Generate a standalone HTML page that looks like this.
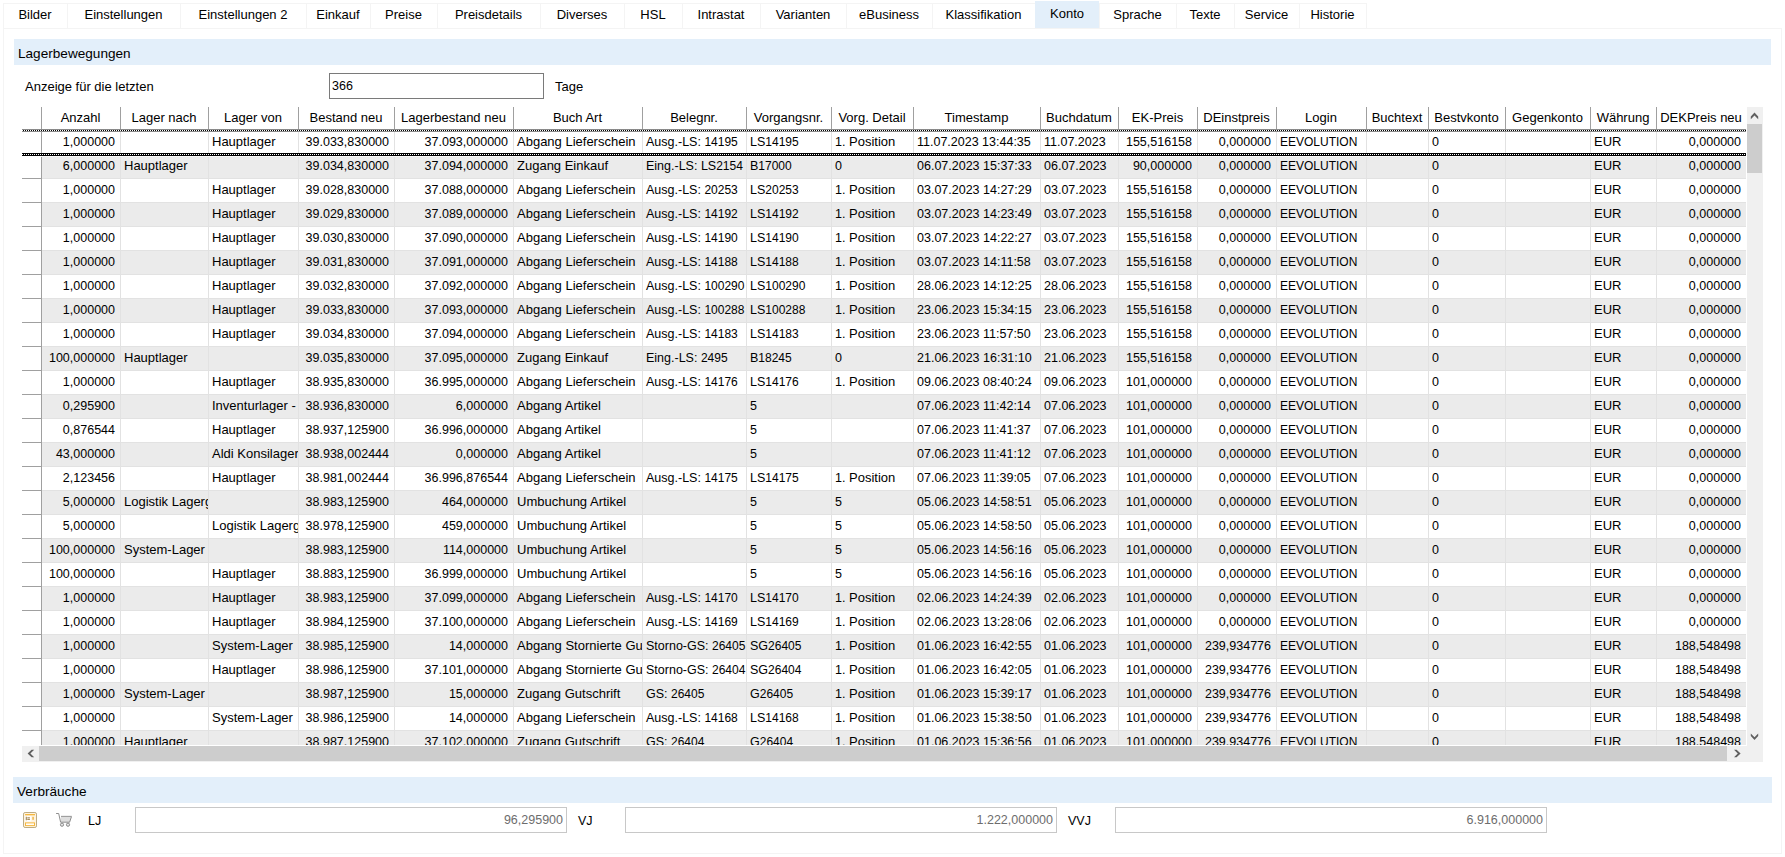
<!DOCTYPE html>
<html><head><meta charset="utf-8"><title>Konto</title>
<style>
*{box-sizing:border-box;margin:0;padding:0}
html,body{width:1785px;height:857px;overflow:hidden;background:#fff}
body{position:relative;font-family:"Liberation Sans",sans-serif;font-size:12px;color:#000}
.a{position:absolute}
.ln{position:absolute;background:#f4f4f4}
.tab{position:absolute;top:3px;height:25px;text-align:center;line-height:23px;white-space:nowrap;font-size:13px;letter-spacing:0px}
.sep{position:absolute;top:3px;width:1px;height:25px;background:#f4f4f4}
.sh{position:absolute;background:#e3effa;height:26px;font-size:13.6px;line-height:26px;padding-left:4px;padding-top:2px}
.grid{position:absolute;left:22px;top:107px;width:1724px;height:638px;overflow:hidden;background:#fff}
.hd{position:absolute;top:0;height:23px;line-height:22px;text-align:center;white-space:nowrap;overflow:hidden;font-size:13px}
.hs{position:absolute;top:0;width:1px;height:23px;background:#a0a0a0}
.r{position:absolute;left:0;width:1724px;height:24px;border-bottom:1px solid #e2e2e2}
.g{background:#ebebeb}
.c{position:absolute;top:0;height:24px;line-height:24px;white-space:nowrap;overflow:hidden;padding:0 5px 0 3px;font-size:12.5px}
.n{font-size:12.5px}
.c.R{text-align:right}
.t{font-size:13px}
.t.u{font-size:12px}
.t.m{font-size:12.5px}
.t.m .n{font-size:12px}
.vs{position:absolute;top:23px;width:1px;height:615px;background:#e2e2e2}
.rh{position:absolute;left:0;width:19px;height:1px;background:#a0a0a0}
.inp{position:absolute;border:1px solid #7a7a7a;background:#fff}
.inp2{position:absolute;border:1px solid #c8c8c8;background:#fff;text-align:right;color:#6d6d6d;padding-right:3px;line-height:25px;font-size:12.5px}
</style></head><body>

<div class="ln" style="left:3px;top:3px;width:1364px;height:1px"></div>
<div class="ln" style="left:3px;top:28px;width:1779px;height:1px"></div>
<div class="ln" style="left:3px;top:3px;width:1px;height:851px"></div>
<div class="ln" style="left:1781px;top:28px;width:1px;height:826px"></div>
<div class="ln" style="left:3px;top:853px;width:1779px;height:1px"></div>
<div class="tab" style="left:3px;width:64px">Bilder</div>
<div class="tab" style="left:67px;width:113px">Einstellungen</div>
<div class="tab" style="left:180px;width:126px">Einstellungen 2</div>
<div class="tab" style="left:306px;width:64px">Einkauf</div>
<div class="tab" style="left:370px;width:67px">Preise</div>
<div class="tab" style="left:437px;width:103px">Preisdetails</div>
<div class="tab" style="left:540px;width:84px">Diverses</div>
<div class="tab" style="left:624px;width:58px">HSL</div>
<div class="tab" style="left:682px;width:78px">Intrastat</div>
<div class="tab" style="left:760px;width:86px">Varianten</div>
<div class="tab" style="left:846px;width:86px">eBusiness</div>
<div class="tab" style="left:932px;width:103px">Klassifikation</div>
<div class="a" style="left:1035px;top:1px;width:64px;height:27px;background:#e3effa"></div>
<div class="tab" style="left:1035px;width:64px;top:2px">Konto</div>
<div class="tab" style="left:1099px;width:77px">Sprache</div>
<div class="tab" style="left:1176px;width:58px">Texte</div>
<div class="tab" style="left:1234px;width:65px">Service</div>
<div class="tab" style="left:1299px;width:67px">Historie</div>
<div class="sep" style="left:67px"></div>
<div class="sep" style="left:180px"></div>
<div class="sep" style="left:306px"></div>
<div class="sep" style="left:370px"></div>
<div class="sep" style="left:437px"></div>
<div class="sep" style="left:540px"></div>
<div class="sep" style="left:624px"></div>
<div class="sep" style="left:682px"></div>
<div class="sep" style="left:760px"></div>
<div class="sep" style="left:846px"></div>
<div class="sep" style="left:932px"></div>
<div class="sep" style="left:1099px"></div>
<div class="sep" style="left:1176px"></div>
<div class="sep" style="left:1234px"></div>
<div class="sep" style="left:1299px"></div>
<div class="sep" style="left:1366px"></div>
<div class="sh" style="left:14px;top:39px;width:1757px">Lagerbewegungen</div>
<div class="a" style="left:25px;top:79px;font-size:13px;line-height:16px">Anzeige für die letzten</div>
<div class="inp" style="left:329px;top:73px;width:215px;height:26px"></div>
<div class="a" style="left:332px;top:78px;font-size:12.5px;line-height:16px">366</div>
<div class="a" style="left:555px;top:79px;font-size:13px;line-height:16px">Tage</div>
<div class="grid">
<div class="r" style="top:24px;left:19px;width:1705px"></div>
<div class="r g" style="top:48px;left:19px;width:1705px"></div>
<div class="r" style="top:72px;left:19px;width:1705px"></div>
<div class="r g" style="top:96px;left:19px;width:1705px"></div>
<div class="r" style="top:120px;left:19px;width:1705px"></div>
<div class="r g" style="top:144px;left:19px;width:1705px"></div>
<div class="r" style="top:168px;left:19px;width:1705px"></div>
<div class="r g" style="top:192px;left:19px;width:1705px"></div>
<div class="r" style="top:216px;left:19px;width:1705px"></div>
<div class="r g" style="top:240px;left:19px;width:1705px"></div>
<div class="r" style="top:264px;left:19px;width:1705px"></div>
<div class="r g" style="top:288px;left:19px;width:1705px"></div>
<div class="r" style="top:312px;left:19px;width:1705px"></div>
<div class="r g" style="top:336px;left:19px;width:1705px"></div>
<div class="r" style="top:360px;left:19px;width:1705px"></div>
<div class="r g" style="top:384px;left:19px;width:1705px"></div>
<div class="r" style="top:408px;left:19px;width:1705px"></div>
<div class="r g" style="top:432px;left:19px;width:1705px"></div>
<div class="r" style="top:456px;left:19px;width:1705px"></div>
<div class="r g" style="top:480px;left:19px;width:1705px"></div>
<div class="r" style="top:504px;left:19px;width:1705px"></div>
<div class="r g" style="top:528px;left:19px;width:1705px"></div>
<div class="r" style="top:552px;left:19px;width:1705px"></div>
<div class="r g" style="top:576px;left:19px;width:1705px"></div>
<div class="r" style="top:600px;left:19px;width:1705px"></div>
<div class="r g" style="top:624px;left:19px;width:1705px"></div>
<div class="vs" style="left:98px"></div>
<div class="vs" style="left:186px"></div>
<div class="vs" style="left:276px"></div>
<div class="vs" style="left:372px"></div>
<div class="vs" style="left:491px"></div>
<div class="vs" style="left:620px"></div>
<div class="vs" style="left:724px"></div>
<div class="vs" style="left:809px"></div>
<div class="vs" style="left:891px"></div>
<div class="vs" style="left:1018px"></div>
<div class="vs" style="left:1096px"></div>
<div class="vs" style="left:1175px"></div>
<div class="vs" style="left:1254px"></div>
<div class="vs" style="left:1344px"></div>
<div class="vs" style="left:1406px"></div>
<div class="vs" style="left:1483px"></div>
<div class="vs" style="left:1568px"></div>
<div class="vs" style="left:1634px"></div>
<div class="a" style="left:0;top:23px;width:1724px;height:24px"><div class="c R" style="left:19px;width:79px">1,000000</div><div class="c t" style="left:187px;width:89px">Hauptlager</div><div class="c R" style="left:277px;width:95px">39.033,830000</div><div class="c R" style="left:373px;width:118px">37.093,000000</div><div class="c t" style="left:492px;width:128px">Abgang Lieferschein</div><div class="c t m" style="left:621px;width:103px">Ausg.-LS: <span class="n">14195</span></div><div class="c t m" style="left:725px;width:84px">LS<span class="n">14195</span></div><div class="c t" style="left:810px;width:81px"><span class="n">1.</span> Position</div><div class="c" style="left:892px;width:126px">11.07.2023 13:44:35</div><div class="c" style="left:1019px;width:77px">11.07.2023</div><div class="c R" style="left:1097px;width:78px">155,516158</div><div class="c R" style="left:1176px;width:78px">0,000000</div><div class="c t u" style="left:1255px;width:89px">EEVOLUTION</div><div class="c" style="left:1407px;width:76px">0</div><div class="c t" style="left:1569px;width:65px">EUR</div><div class="c R" style="left:1635px;width:89px">0,000000</div></div>
<div class="a" style="left:0;top:47px;width:1724px;height:24px"><div class="c R" style="left:19px;width:79px">6,000000</div><div class="c t" style="left:99px;width:87px">Hauptlager</div><div class="c R" style="left:277px;width:95px">39.034,830000</div><div class="c R" style="left:373px;width:118px">37.094,000000</div><div class="c t" style="left:492px;width:128px">Zugang Einkauf</div><div class="c t m" style="left:621px;width:103px">Eing.-LS: LS<span class="n">2154</span></div><div class="c t m" style="left:725px;width:84px">B<span class="n">17000</span></div><div class="c" style="left:810px;width:81px">0</div><div class="c" style="left:892px;width:126px">06.07.2023 15:37:33</div><div class="c" style="left:1019px;width:77px">06.07.2023</div><div class="c R" style="left:1097px;width:78px">90,000000</div><div class="c R" style="left:1176px;width:78px">0,000000</div><div class="c t u" style="left:1255px;width:89px">EEVOLUTION</div><div class="c" style="left:1407px;width:76px">0</div><div class="c t" style="left:1569px;width:65px">EUR</div><div class="c R" style="left:1635px;width:89px">0,000000</div></div>
<div class="a" style="left:0;top:71px;width:1724px;height:24px"><div class="c R" style="left:19px;width:79px">1,000000</div><div class="c t" style="left:187px;width:89px">Hauptlager</div><div class="c R" style="left:277px;width:95px">39.028,830000</div><div class="c R" style="left:373px;width:118px">37.088,000000</div><div class="c t" style="left:492px;width:128px">Abgang Lieferschein</div><div class="c t m" style="left:621px;width:103px">Ausg.-LS: <span class="n">20253</span></div><div class="c t m" style="left:725px;width:84px">LS<span class="n">20253</span></div><div class="c t" style="left:810px;width:81px"><span class="n">1.</span> Position</div><div class="c" style="left:892px;width:126px">03.07.2023 14:27:29</div><div class="c" style="left:1019px;width:77px">03.07.2023</div><div class="c R" style="left:1097px;width:78px">155,516158</div><div class="c R" style="left:1176px;width:78px">0,000000</div><div class="c t u" style="left:1255px;width:89px">EEVOLUTION</div><div class="c" style="left:1407px;width:76px">0</div><div class="c t" style="left:1569px;width:65px">EUR</div><div class="c R" style="left:1635px;width:89px">0,000000</div></div>
<div class="a" style="left:0;top:95px;width:1724px;height:24px"><div class="c R" style="left:19px;width:79px">1,000000</div><div class="c t" style="left:187px;width:89px">Hauptlager</div><div class="c R" style="left:277px;width:95px">39.029,830000</div><div class="c R" style="left:373px;width:118px">37.089,000000</div><div class="c t" style="left:492px;width:128px">Abgang Lieferschein</div><div class="c t m" style="left:621px;width:103px">Ausg.-LS: <span class="n">14192</span></div><div class="c t m" style="left:725px;width:84px">LS<span class="n">14192</span></div><div class="c t" style="left:810px;width:81px"><span class="n">1.</span> Position</div><div class="c" style="left:892px;width:126px">03.07.2023 14:23:49</div><div class="c" style="left:1019px;width:77px">03.07.2023</div><div class="c R" style="left:1097px;width:78px">155,516158</div><div class="c R" style="left:1176px;width:78px">0,000000</div><div class="c t u" style="left:1255px;width:89px">EEVOLUTION</div><div class="c" style="left:1407px;width:76px">0</div><div class="c t" style="left:1569px;width:65px">EUR</div><div class="c R" style="left:1635px;width:89px">0,000000</div></div>
<div class="a" style="left:0;top:119px;width:1724px;height:24px"><div class="c R" style="left:19px;width:79px">1,000000</div><div class="c t" style="left:187px;width:89px">Hauptlager</div><div class="c R" style="left:277px;width:95px">39.030,830000</div><div class="c R" style="left:373px;width:118px">37.090,000000</div><div class="c t" style="left:492px;width:128px">Abgang Lieferschein</div><div class="c t m" style="left:621px;width:103px">Ausg.-LS: <span class="n">14190</span></div><div class="c t m" style="left:725px;width:84px">LS<span class="n">14190</span></div><div class="c t" style="left:810px;width:81px"><span class="n">1.</span> Position</div><div class="c" style="left:892px;width:126px">03.07.2023 14:22:27</div><div class="c" style="left:1019px;width:77px">03.07.2023</div><div class="c R" style="left:1097px;width:78px">155,516158</div><div class="c R" style="left:1176px;width:78px">0,000000</div><div class="c t u" style="left:1255px;width:89px">EEVOLUTION</div><div class="c" style="left:1407px;width:76px">0</div><div class="c t" style="left:1569px;width:65px">EUR</div><div class="c R" style="left:1635px;width:89px">0,000000</div></div>
<div class="a" style="left:0;top:143px;width:1724px;height:24px"><div class="c R" style="left:19px;width:79px">1,000000</div><div class="c t" style="left:187px;width:89px">Hauptlager</div><div class="c R" style="left:277px;width:95px">39.031,830000</div><div class="c R" style="left:373px;width:118px">37.091,000000</div><div class="c t" style="left:492px;width:128px">Abgang Lieferschein</div><div class="c t m" style="left:621px;width:103px">Ausg.-LS: <span class="n">14188</span></div><div class="c t m" style="left:725px;width:84px">LS<span class="n">14188</span></div><div class="c t" style="left:810px;width:81px"><span class="n">1.</span> Position</div><div class="c" style="left:892px;width:126px">03.07.2023 14:11:58</div><div class="c" style="left:1019px;width:77px">03.07.2023</div><div class="c R" style="left:1097px;width:78px">155,516158</div><div class="c R" style="left:1176px;width:78px">0,000000</div><div class="c t u" style="left:1255px;width:89px">EEVOLUTION</div><div class="c" style="left:1407px;width:76px">0</div><div class="c t" style="left:1569px;width:65px">EUR</div><div class="c R" style="left:1635px;width:89px">0,000000</div></div>
<div class="a" style="left:0;top:167px;width:1724px;height:24px"><div class="c R" style="left:19px;width:79px">1,000000</div><div class="c t" style="left:187px;width:89px">Hauptlager</div><div class="c R" style="left:277px;width:95px">39.032,830000</div><div class="c R" style="left:373px;width:118px">37.092,000000</div><div class="c t" style="left:492px;width:128px">Abgang Lieferschein</div><div class="c t m" style="left:621px;width:103px">Ausg.-LS: <span class="n">100290</span></div><div class="c t m" style="left:725px;width:84px">LS<span class="n">100290</span></div><div class="c t" style="left:810px;width:81px"><span class="n">1.</span> Position</div><div class="c" style="left:892px;width:126px">28.06.2023 14:12:25</div><div class="c" style="left:1019px;width:77px">28.06.2023</div><div class="c R" style="left:1097px;width:78px">155,516158</div><div class="c R" style="left:1176px;width:78px">0,000000</div><div class="c t u" style="left:1255px;width:89px">EEVOLUTION</div><div class="c" style="left:1407px;width:76px">0</div><div class="c t" style="left:1569px;width:65px">EUR</div><div class="c R" style="left:1635px;width:89px">0,000000</div></div>
<div class="a" style="left:0;top:191px;width:1724px;height:24px"><div class="c R" style="left:19px;width:79px">1,000000</div><div class="c t" style="left:187px;width:89px">Hauptlager</div><div class="c R" style="left:277px;width:95px">39.033,830000</div><div class="c R" style="left:373px;width:118px">37.093,000000</div><div class="c t" style="left:492px;width:128px">Abgang Lieferschein</div><div class="c t m" style="left:621px;width:103px">Ausg.-LS: <span class="n">100288</span></div><div class="c t m" style="left:725px;width:84px">LS<span class="n">100288</span></div><div class="c t" style="left:810px;width:81px"><span class="n">1.</span> Position</div><div class="c" style="left:892px;width:126px">23.06.2023 15:34:15</div><div class="c" style="left:1019px;width:77px">23.06.2023</div><div class="c R" style="left:1097px;width:78px">155,516158</div><div class="c R" style="left:1176px;width:78px">0,000000</div><div class="c t u" style="left:1255px;width:89px">EEVOLUTION</div><div class="c" style="left:1407px;width:76px">0</div><div class="c t" style="left:1569px;width:65px">EUR</div><div class="c R" style="left:1635px;width:89px">0,000000</div></div>
<div class="a" style="left:0;top:215px;width:1724px;height:24px"><div class="c R" style="left:19px;width:79px">1,000000</div><div class="c t" style="left:187px;width:89px">Hauptlager</div><div class="c R" style="left:277px;width:95px">39.034,830000</div><div class="c R" style="left:373px;width:118px">37.094,000000</div><div class="c t" style="left:492px;width:128px">Abgang Lieferschein</div><div class="c t m" style="left:621px;width:103px">Ausg.-LS: <span class="n">14183</span></div><div class="c t m" style="left:725px;width:84px">LS<span class="n">14183</span></div><div class="c t" style="left:810px;width:81px"><span class="n">1.</span> Position</div><div class="c" style="left:892px;width:126px">23.06.2023 11:57:50</div><div class="c" style="left:1019px;width:77px">23.06.2023</div><div class="c R" style="left:1097px;width:78px">155,516158</div><div class="c R" style="left:1176px;width:78px">0,000000</div><div class="c t u" style="left:1255px;width:89px">EEVOLUTION</div><div class="c" style="left:1407px;width:76px">0</div><div class="c t" style="left:1569px;width:65px">EUR</div><div class="c R" style="left:1635px;width:89px">0,000000</div></div>
<div class="a" style="left:0;top:239px;width:1724px;height:24px"><div class="c R" style="left:19px;width:79px">100,000000</div><div class="c t" style="left:99px;width:87px">Hauptlager</div><div class="c R" style="left:277px;width:95px">39.035,830000</div><div class="c R" style="left:373px;width:118px">37.095,000000</div><div class="c t" style="left:492px;width:128px">Zugang Einkauf</div><div class="c t m" style="left:621px;width:103px">Eing.-LS: <span class="n">2495</span></div><div class="c t m" style="left:725px;width:84px">B<span class="n">18245</span></div><div class="c" style="left:810px;width:81px">0</div><div class="c" style="left:892px;width:126px">21.06.2023 16:31:10</div><div class="c" style="left:1019px;width:77px">21.06.2023</div><div class="c R" style="left:1097px;width:78px">155,516158</div><div class="c R" style="left:1176px;width:78px">0,000000</div><div class="c t u" style="left:1255px;width:89px">EEVOLUTION</div><div class="c" style="left:1407px;width:76px">0</div><div class="c t" style="left:1569px;width:65px">EUR</div><div class="c R" style="left:1635px;width:89px">0,000000</div></div>
<div class="a" style="left:0;top:263px;width:1724px;height:24px"><div class="c R" style="left:19px;width:79px">1,000000</div><div class="c t" style="left:187px;width:89px">Hauptlager</div><div class="c R" style="left:277px;width:95px">38.935,830000</div><div class="c R" style="left:373px;width:118px">36.995,000000</div><div class="c t" style="left:492px;width:128px">Abgang Lieferschein</div><div class="c t m" style="left:621px;width:103px">Ausg.-LS: <span class="n">14176</span></div><div class="c t m" style="left:725px;width:84px">LS<span class="n">14176</span></div><div class="c t" style="left:810px;width:81px"><span class="n">1.</span> Position</div><div class="c" style="left:892px;width:126px">09.06.2023 08:40:24</div><div class="c" style="left:1019px;width:77px">09.06.2023</div><div class="c R" style="left:1097px;width:78px">101,000000</div><div class="c R" style="left:1176px;width:78px">0,000000</div><div class="c t u" style="left:1255px;width:89px">EEVOLUTION</div><div class="c" style="left:1407px;width:76px">0</div><div class="c t" style="left:1569px;width:65px">EUR</div><div class="c R" style="left:1635px;width:89px">0,000000</div></div>
<div class="a" style="left:0;top:287px;width:1724px;height:24px"><div class="c R" style="left:19px;width:79px">0,295900</div><div class="c t" style="left:187px;width:89px">Inventurlager - Differenzen</div><div class="c R" style="left:277px;width:95px">38.936,830000</div><div class="c R" style="left:373px;width:118px">6,000000</div><div class="c t" style="left:492px;width:128px">Abgang Artikel</div><div class="c" style="left:725px;width:84px">5</div><div class="c" style="left:892px;width:126px">07.06.2023 11:42:14</div><div class="c" style="left:1019px;width:77px">07.06.2023</div><div class="c R" style="left:1097px;width:78px">101,000000</div><div class="c R" style="left:1176px;width:78px">0,000000</div><div class="c t u" style="left:1255px;width:89px">EEVOLUTION</div><div class="c" style="left:1407px;width:76px">0</div><div class="c t" style="left:1569px;width:65px">EUR</div><div class="c R" style="left:1635px;width:89px">0,000000</div></div>
<div class="a" style="left:0;top:311px;width:1724px;height:24px"><div class="c R" style="left:19px;width:79px">0,876544</div><div class="c t" style="left:187px;width:89px">Hauptlager</div><div class="c R" style="left:277px;width:95px">38.937,125900</div><div class="c R" style="left:373px;width:118px">36.996,000000</div><div class="c t" style="left:492px;width:128px">Abgang Artikel</div><div class="c" style="left:725px;width:84px">5</div><div class="c" style="left:892px;width:126px">07.06.2023 11:41:37</div><div class="c" style="left:1019px;width:77px">07.06.2023</div><div class="c R" style="left:1097px;width:78px">101,000000</div><div class="c R" style="left:1176px;width:78px">0,000000</div><div class="c t u" style="left:1255px;width:89px">EEVOLUTION</div><div class="c" style="left:1407px;width:76px">0</div><div class="c t" style="left:1569px;width:65px">EUR</div><div class="c R" style="left:1635px;width:89px">0,000000</div></div>
<div class="a" style="left:0;top:335px;width:1724px;height:24px"><div class="c R" style="left:19px;width:79px">43,000000</div><div class="c t" style="left:187px;width:89px">Aldi Konsilager</div><div class="c R" style="left:277px;width:95px">38.938,002444</div><div class="c R" style="left:373px;width:118px">0,000000</div><div class="c t" style="left:492px;width:128px">Abgang Artikel</div><div class="c" style="left:725px;width:84px">5</div><div class="c" style="left:892px;width:126px">07.06.2023 11:41:12</div><div class="c" style="left:1019px;width:77px">07.06.2023</div><div class="c R" style="left:1097px;width:78px">101,000000</div><div class="c R" style="left:1176px;width:78px">0,000000</div><div class="c t u" style="left:1255px;width:89px">EEVOLUTION</div><div class="c" style="left:1407px;width:76px">0</div><div class="c t" style="left:1569px;width:65px">EUR</div><div class="c R" style="left:1635px;width:89px">0,000000</div></div>
<div class="a" style="left:0;top:359px;width:1724px;height:24px"><div class="c R" style="left:19px;width:79px">2,123456</div><div class="c t" style="left:187px;width:89px">Hauptlager</div><div class="c R" style="left:277px;width:95px">38.981,002444</div><div class="c R" style="left:373px;width:118px">36.996,876544</div><div class="c t" style="left:492px;width:128px">Abgang Lieferschein</div><div class="c t m" style="left:621px;width:103px">Ausg.-LS: <span class="n">14175</span></div><div class="c t m" style="left:725px;width:84px">LS<span class="n">14175</span></div><div class="c t" style="left:810px;width:81px"><span class="n">1.</span> Position</div><div class="c" style="left:892px;width:126px">07.06.2023 11:39:05</div><div class="c" style="left:1019px;width:77px">07.06.2023</div><div class="c R" style="left:1097px;width:78px">101,000000</div><div class="c R" style="left:1176px;width:78px">0,000000</div><div class="c t u" style="left:1255px;width:89px">EEVOLUTION</div><div class="c" style="left:1407px;width:76px">0</div><div class="c t" style="left:1569px;width:65px">EUR</div><div class="c R" style="left:1635px;width:89px">0,000000</div></div>
<div class="a" style="left:0;top:383px;width:1724px;height:24px"><div class="c R" style="left:19px;width:79px">5,000000</div><div class="c t" style="left:99px;width:87px">Logistik Lagergasse</div><div class="c R" style="left:277px;width:95px">38.983,125900</div><div class="c R" style="left:373px;width:118px">464,000000</div><div class="c t" style="left:492px;width:128px">Umbuchung Artikel</div><div class="c" style="left:725px;width:84px">5</div><div class="c" style="left:810px;width:81px">5</div><div class="c" style="left:892px;width:126px">05.06.2023 14:58:51</div><div class="c" style="left:1019px;width:77px">05.06.2023</div><div class="c R" style="left:1097px;width:78px">101,000000</div><div class="c R" style="left:1176px;width:78px">0,000000</div><div class="c t u" style="left:1255px;width:89px">EEVOLUTION</div><div class="c" style="left:1407px;width:76px">0</div><div class="c t" style="left:1569px;width:65px">EUR</div><div class="c R" style="left:1635px;width:89px">0,000000</div></div>
<div class="a" style="left:0;top:407px;width:1724px;height:24px"><div class="c R" style="left:19px;width:79px">5,000000</div><div class="c t" style="left:187px;width:89px">Logistik Lagergasse</div><div class="c R" style="left:277px;width:95px">38.978,125900</div><div class="c R" style="left:373px;width:118px">459,000000</div><div class="c t" style="left:492px;width:128px">Umbuchung Artikel</div><div class="c" style="left:725px;width:84px">5</div><div class="c" style="left:810px;width:81px">5</div><div class="c" style="left:892px;width:126px">05.06.2023 14:58:50</div><div class="c" style="left:1019px;width:77px">05.06.2023</div><div class="c R" style="left:1097px;width:78px">101,000000</div><div class="c R" style="left:1176px;width:78px">0,000000</div><div class="c t u" style="left:1255px;width:89px">EEVOLUTION</div><div class="c" style="left:1407px;width:76px">0</div><div class="c t" style="left:1569px;width:65px">EUR</div><div class="c R" style="left:1635px;width:89px">0,000000</div></div>
<div class="a" style="left:0;top:431px;width:1724px;height:24px"><div class="c R" style="left:19px;width:79px">100,000000</div><div class="c t" style="left:99px;width:87px">System-Lager</div><div class="c R" style="left:277px;width:95px">38.983,125900</div><div class="c R" style="left:373px;width:118px">114,000000</div><div class="c t" style="left:492px;width:128px">Umbuchung Artikel</div><div class="c" style="left:725px;width:84px">5</div><div class="c" style="left:810px;width:81px">5</div><div class="c" style="left:892px;width:126px">05.06.2023 14:56:16</div><div class="c" style="left:1019px;width:77px">05.06.2023</div><div class="c R" style="left:1097px;width:78px">101,000000</div><div class="c R" style="left:1176px;width:78px">0,000000</div><div class="c t u" style="left:1255px;width:89px">EEVOLUTION</div><div class="c" style="left:1407px;width:76px">0</div><div class="c t" style="left:1569px;width:65px">EUR</div><div class="c R" style="left:1635px;width:89px">0,000000</div></div>
<div class="a" style="left:0;top:455px;width:1724px;height:24px"><div class="c R" style="left:19px;width:79px">100,000000</div><div class="c t" style="left:187px;width:89px">Hauptlager</div><div class="c R" style="left:277px;width:95px">38.883,125900</div><div class="c R" style="left:373px;width:118px">36.999,000000</div><div class="c t" style="left:492px;width:128px">Umbuchung Artikel</div><div class="c" style="left:725px;width:84px">5</div><div class="c" style="left:810px;width:81px">5</div><div class="c" style="left:892px;width:126px">05.06.2023 14:56:16</div><div class="c" style="left:1019px;width:77px">05.06.2023</div><div class="c R" style="left:1097px;width:78px">101,000000</div><div class="c R" style="left:1176px;width:78px">0,000000</div><div class="c t u" style="left:1255px;width:89px">EEVOLUTION</div><div class="c" style="left:1407px;width:76px">0</div><div class="c t" style="left:1569px;width:65px">EUR</div><div class="c R" style="left:1635px;width:89px">0,000000</div></div>
<div class="a" style="left:0;top:479px;width:1724px;height:24px"><div class="c R" style="left:19px;width:79px">1,000000</div><div class="c t" style="left:187px;width:89px">Hauptlager</div><div class="c R" style="left:277px;width:95px">38.983,125900</div><div class="c R" style="left:373px;width:118px">37.099,000000</div><div class="c t" style="left:492px;width:128px">Abgang Lieferschein</div><div class="c t m" style="left:621px;width:103px">Ausg.-LS: <span class="n">14170</span></div><div class="c t m" style="left:725px;width:84px">LS<span class="n">14170</span></div><div class="c t" style="left:810px;width:81px"><span class="n">1.</span> Position</div><div class="c" style="left:892px;width:126px">02.06.2023 14:24:39</div><div class="c" style="left:1019px;width:77px">02.06.2023</div><div class="c R" style="left:1097px;width:78px">101,000000</div><div class="c R" style="left:1176px;width:78px">0,000000</div><div class="c t u" style="left:1255px;width:89px">EEVOLUTION</div><div class="c" style="left:1407px;width:76px">0</div><div class="c t" style="left:1569px;width:65px">EUR</div><div class="c R" style="left:1635px;width:89px">0,000000</div></div>
<div class="a" style="left:0;top:503px;width:1724px;height:24px"><div class="c R" style="left:19px;width:79px">1,000000</div><div class="c t" style="left:187px;width:89px">Hauptlager</div><div class="c R" style="left:277px;width:95px">38.984,125900</div><div class="c R" style="left:373px;width:118px">37.100,000000</div><div class="c t" style="left:492px;width:128px">Abgang Lieferschein</div><div class="c t m" style="left:621px;width:103px">Ausg.-LS: <span class="n">14169</span></div><div class="c t m" style="left:725px;width:84px">LS<span class="n">14169</span></div><div class="c t" style="left:810px;width:81px"><span class="n">1.</span> Position</div><div class="c" style="left:892px;width:126px">02.06.2023 13:28:06</div><div class="c" style="left:1019px;width:77px">02.06.2023</div><div class="c R" style="left:1097px;width:78px">101,000000</div><div class="c R" style="left:1176px;width:78px">0,000000</div><div class="c t u" style="left:1255px;width:89px">EEVOLUTION</div><div class="c" style="left:1407px;width:76px">0</div><div class="c t" style="left:1569px;width:65px">EUR</div><div class="c R" style="left:1635px;width:89px">0,000000</div></div>
<div class="a" style="left:0;top:527px;width:1724px;height:24px"><div class="c R" style="left:19px;width:79px">1,000000</div><div class="c t" style="left:187px;width:89px">System-Lager</div><div class="c R" style="left:277px;width:95px">38.985,125900</div><div class="c R" style="left:373px;width:118px">14,000000</div><div class="c t" style="left:492px;width:128px">Abgang Stornierte Gutschrift</div><div class="c t m" style="left:621px;width:103px">Storno-GS: <span class="n">26405</span></div><div class="c t m" style="left:725px;width:84px">SG<span class="n">26405</span></div><div class="c t" style="left:810px;width:81px"><span class="n">1.</span> Position</div><div class="c" style="left:892px;width:126px">01.06.2023 16:42:55</div><div class="c" style="left:1019px;width:77px">01.06.2023</div><div class="c R" style="left:1097px;width:78px">101,000000</div><div class="c R" style="left:1176px;width:78px">239,934776</div><div class="c t u" style="left:1255px;width:89px">EEVOLUTION</div><div class="c" style="left:1407px;width:76px">0</div><div class="c t" style="left:1569px;width:65px">EUR</div><div class="c R" style="left:1635px;width:89px">188,548498</div></div>
<div class="a" style="left:0;top:551px;width:1724px;height:24px"><div class="c R" style="left:19px;width:79px">1,000000</div><div class="c t" style="left:187px;width:89px">Hauptlager</div><div class="c R" style="left:277px;width:95px">38.986,125900</div><div class="c R" style="left:373px;width:118px">37.101,000000</div><div class="c t" style="left:492px;width:128px">Abgang Stornierte Gutschrift</div><div class="c t m" style="left:621px;width:103px">Storno-GS: <span class="n">26404</span></div><div class="c t m" style="left:725px;width:84px">SG<span class="n">26404</span></div><div class="c t" style="left:810px;width:81px"><span class="n">1.</span> Position</div><div class="c" style="left:892px;width:126px">01.06.2023 16:42:05</div><div class="c" style="left:1019px;width:77px">01.06.2023</div><div class="c R" style="left:1097px;width:78px">101,000000</div><div class="c R" style="left:1176px;width:78px">239,934776</div><div class="c t u" style="left:1255px;width:89px">EEVOLUTION</div><div class="c" style="left:1407px;width:76px">0</div><div class="c t" style="left:1569px;width:65px">EUR</div><div class="c R" style="left:1635px;width:89px">188,548498</div></div>
<div class="a" style="left:0;top:575px;width:1724px;height:24px"><div class="c R" style="left:19px;width:79px">1,000000</div><div class="c t" style="left:99px;width:87px">System-Lager</div><div class="c R" style="left:277px;width:95px">38.987,125900</div><div class="c R" style="left:373px;width:118px">15,000000</div><div class="c t" style="left:492px;width:128px">Zugang Gutschrift</div><div class="c t m" style="left:621px;width:103px">GS: <span class="n">26405</span></div><div class="c t m" style="left:725px;width:84px">G<span class="n">26405</span></div><div class="c t" style="left:810px;width:81px"><span class="n">1.</span> Position</div><div class="c" style="left:892px;width:126px">01.06.2023 15:39:17</div><div class="c" style="left:1019px;width:77px">01.06.2023</div><div class="c R" style="left:1097px;width:78px">101,000000</div><div class="c R" style="left:1176px;width:78px">239,934776</div><div class="c t u" style="left:1255px;width:89px">EEVOLUTION</div><div class="c" style="left:1407px;width:76px">0</div><div class="c t" style="left:1569px;width:65px">EUR</div><div class="c R" style="left:1635px;width:89px">188,548498</div></div>
<div class="a" style="left:0;top:599px;width:1724px;height:24px"><div class="c R" style="left:19px;width:79px">1,000000</div><div class="c t" style="left:187px;width:89px">System-Lager</div><div class="c R" style="left:277px;width:95px">38.986,125900</div><div class="c R" style="left:373px;width:118px">14,000000</div><div class="c t" style="left:492px;width:128px">Abgang Lieferschein</div><div class="c t m" style="left:621px;width:103px">Ausg.-LS: <span class="n">14168</span></div><div class="c t m" style="left:725px;width:84px">LS<span class="n">14168</span></div><div class="c t" style="left:810px;width:81px"><span class="n">1.</span> Position</div><div class="c" style="left:892px;width:126px">01.06.2023 15:38:50</div><div class="c" style="left:1019px;width:77px">01.06.2023</div><div class="c R" style="left:1097px;width:78px">101,000000</div><div class="c R" style="left:1176px;width:78px">239,934776</div><div class="c t u" style="left:1255px;width:89px">EEVOLUTION</div><div class="c" style="left:1407px;width:76px">0</div><div class="c t" style="left:1569px;width:65px">EUR</div><div class="c R" style="left:1635px;width:89px">188,548498</div></div>
<div class="a" style="left:0;top:623px;width:1724px;height:24px"><div class="c R" style="left:19px;width:79px">1,000000</div><div class="c t" style="left:99px;width:87px">Hauptlager</div><div class="c R" style="left:277px;width:95px">38.987,125900</div><div class="c R" style="left:373px;width:118px">37.102,000000</div><div class="c t" style="left:492px;width:128px">Zugang Gutschrift</div><div class="c t m" style="left:621px;width:103px">GS: <span class="n">26404</span></div><div class="c t m" style="left:725px;width:84px">G<span class="n">26404</span></div><div class="c t" style="left:810px;width:81px"><span class="n">1.</span> Position</div><div class="c" style="left:892px;width:126px">01.06.2023 15:36:56</div><div class="c" style="left:1019px;width:77px">01.06.2023</div><div class="c R" style="left:1097px;width:78px">101,000000</div><div class="c R" style="left:1176px;width:78px">239,934776</div><div class="c t u" style="left:1255px;width:89px">EEVOLUTION</div><div class="c" style="left:1407px;width:76px">0</div><div class="c t" style="left:1569px;width:65px">EUR</div><div class="c R" style="left:1635px;width:89px">188,548498</div></div>
<div class="a" style="left:0;top:0;width:1724px;height:23px;background:#fff"></div>
<div class="hd" style="left:19px;width:79px">Anzahl</div>
<div class="hd" style="left:98px;width:88px">Lager nach</div>
<div class="hd" style="left:186px;width:90px">Lager von</div>
<div class="hd" style="left:276px;width:96px">Bestand neu</div>
<div class="hd" style="left:372px;width:119px">Lagerbestand neu</div>
<div class="hd" style="left:491px;width:129px">Buch Art</div>
<div class="hd" style="left:620px;width:104px">Belegnr.</div>
<div class="hd" style="left:724px;width:85px">Vorgangsnr.</div>
<div class="hd" style="left:809px;width:82px">Vorg. Detail</div>
<div class="hd" style="left:891px;width:127px">Timestamp</div>
<div class="hd" style="left:1018px;width:78px">Buchdatum</div>
<div class="hd" style="left:1096px;width:79px">EK-Preis</div>
<div class="hd" style="left:1175px;width:79px">DEinstpreis</div>
<div class="hd" style="left:1254px;width:90px">Login</div>
<div class="hd" style="left:1344px;width:62px">Buchtext</div>
<div class="hd" style="left:1406px;width:77px">Bestvkonto</div>
<div class="hd" style="left:1483px;width:85px">Gegenkonto</div>
<div class="hd" style="left:1568px;width:66px">Währung</div>
<div class="hd" style="left:1634px;width:90px">DEKPreis neu</div>
<div class="hs" style="left:19px"></div>
<div class="hs" style="left:98px"></div>
<div class="hs" style="left:186px"></div>
<div class="hs" style="left:276px"></div>
<div class="hs" style="left:372px"></div>
<div class="hs" style="left:491px"></div>
<div class="hs" style="left:620px"></div>
<div class="hs" style="left:724px"></div>
<div class="hs" style="left:809px"></div>
<div class="hs" style="left:891px"></div>
<div class="hs" style="left:1018px"></div>
<div class="hs" style="left:1096px"></div>
<div class="hs" style="left:1175px"></div>
<div class="hs" style="left:1254px"></div>
<div class="hs" style="left:1344px"></div>
<div class="hs" style="left:1406px"></div>
<div class="hs" style="left:1483px"></div>
<div class="hs" style="left:1568px"></div>
<div class="hs" style="left:1634px"></div>
<div class="a" style="left:0;top:23px;width:19px;height:615px;background:#fff"></div>
<div class="a" style="left:19px;top:0;width:1px;height:638px;background:#a0a0a0"></div>
<div class="rh" style="top:71px"></div>
<div class="rh" style="top:95px"></div>
<div class="rh" style="top:119px"></div>
<div class="rh" style="top:143px"></div>
<div class="rh" style="top:167px"></div>
<div class="rh" style="top:191px"></div>
<div class="rh" style="top:215px"></div>
<div class="rh" style="top:239px"></div>
<div class="rh" style="top:263px"></div>
<div class="rh" style="top:287px"></div>
<div class="rh" style="top:311px"></div>
<div class="rh" style="top:335px"></div>
<div class="rh" style="top:359px"></div>
<div class="rh" style="top:383px"></div>
<div class="rh" style="top:407px"></div>
<div class="rh" style="top:431px"></div>
<div class="rh" style="top:455px"></div>
<div class="rh" style="top:479px"></div>
<div class="rh" style="top:503px"></div>
<div class="rh" style="top:527px"></div>
<div class="rh" style="top:551px"></div>
<div class="rh" style="top:575px"></div>
<div class="rh" style="top:599px"></div>
<div class="rh" style="top:623px"></div>
<div class="a" style="left:0;top:22px;width:1724px;height:3px;background:#8a8a8a"></div>
<div class="a" style="left:0;top:23px;width:1724px;height:1px;background-image:repeating-linear-gradient(90deg,#fff 0 1px,#000 1px 2px)"></div>
<div class="a" style="left:0;top:46px;width:1724px;height:3px;background:#000"></div>
<div class="a" style="left:0;top:47px;width:1724px;height:1px;background-image:repeating-linear-gradient(90deg,#fff 0 1px,#000 1px 2px)"></div>
<div class="a" style="left:19px;top:49px;width:1705px;height:1px;background:#f8f8f8"></div>
</div>
<div class="a" style="left:1747px;top:107px;width:16px;height:655px;background:#f0f0f0"></div>
<div class="a" style="left:1747px;top:124px;width:15px;height:49px;background:#cdcdcd"></div>
<svg class="a" style="left:1747px;top:107px" width="16" height="17"><polygon points="3.8,9.6 7.5,5.6 11.2,9.6 11.2,12.2 7.5,8.4 3.8,12.2" fill="#606060"/></svg>
<svg class="a" style="left:1747px;top:729px" width="16" height="17"><polygon points="3.8,7 7.5,11 11.2,7 11.2,4.4 7.5,8.2 3.8,4.4" fill="#606060"/></svg>
<div class="a" style="left:22px;top:746px;width:1725px;height:16px;background:#f0f0f0"></div>
<div class="a" style="left:39px;top:746px;width:1688px;height:15px;background:#cdcdcd"></div>
<svg class="a" style="left:22px;top:746px" width="17" height="16"><polygon points="9.6,3.8 5.6,7.5 9.6,11.2 12.2,11.2 8.4,7.5 12.2,3.8" fill="#606060"/></svg>
<svg class="a" style="left:1727px;top:746px" width="20" height="16"><polygon points="9.6,3.8 13.6,7.5 9.6,11.2 7,11.2 10.8,7.5 7,3.8" fill="#606060"/></svg>
<div class="sh" style="left:13px;top:777px;width:1759px">Verbräuche</div>
<svg class="a" style="left:23px;top:812px" width="14" height="16" viewBox="0 0 14 16">
<rect x="0.5" y="0.5" width="13" height="15" rx="1.6" fill="#fff4df" stroke="#bdab82" stroke-width="1"/>
<rect x="2.1" y="2" width="9.9" height="1.3" fill="#f5b73f"/>
<rect x="1.9" y="4.2" width="6.4" height="5.2" fill="#fff"/>
<path d="M2.7 4.8 h1.2 v3.4 h-1.2z M4.3 5.3 h2.6 v1 h-2.6z M4.3 6.8 h2.6 v1.2 h-2.6z" fill="#a68c5e"/>
<rect x="9.2" y="4.8" width="1.8" height="3" fill="#f2c060"/>
<rect x="2.5" y="10.9" width="9" height="2.7" fill="#fff" stroke="#f5b73f" stroke-width="1"/>
</svg>
<svg class="a" style="left:56px;top:812px" width="17" height="16" viewBox="0 0 17 16">
<path d="M5 4.4 H15.7 L13.6 10.2 H4.6 Z" fill="#dedede"/>
<path d="M0.1 1.5 H2.7 L4.6 10.2 H13.6 L15.4 4.9" fill="none" stroke="#8e8e8e" stroke-width="1"/>
<path d="M5 4.4 H15.8" fill="none" stroke="#9a9a9a" stroke-width="1.1"/>
<circle cx="6" cy="12.7" r="1.6" fill="#e6e6e6" stroke="#8a8a8a" stroke-width="1"/>
<circle cx="12" cy="12.7" r="1.6" fill="#e6e6e6" stroke="#8a8a8a" stroke-width="1"/>
</svg>
<div class="a" style="left:88px;top:813px;font-size:12.5px;line-height:16px">LJ</div>
<div class="inp2" style="left:135px;top:807px;width:432px;height:26px">96,295900</div>
<div class="a" style="left:578px;top:813px;font-size:12.5px;line-height:16px">VJ</div>
<div class="inp2" style="left:625px;top:807px;width:432px;height:26px">1.222,000000</div>
<div class="a" style="left:1068px;top:813px;font-size:12.5px;line-height:16px">VVJ</div>
<div class="inp2" style="left:1115px;top:807px;width:432px;height:26px">6.916,000000</div>
</body></html>
